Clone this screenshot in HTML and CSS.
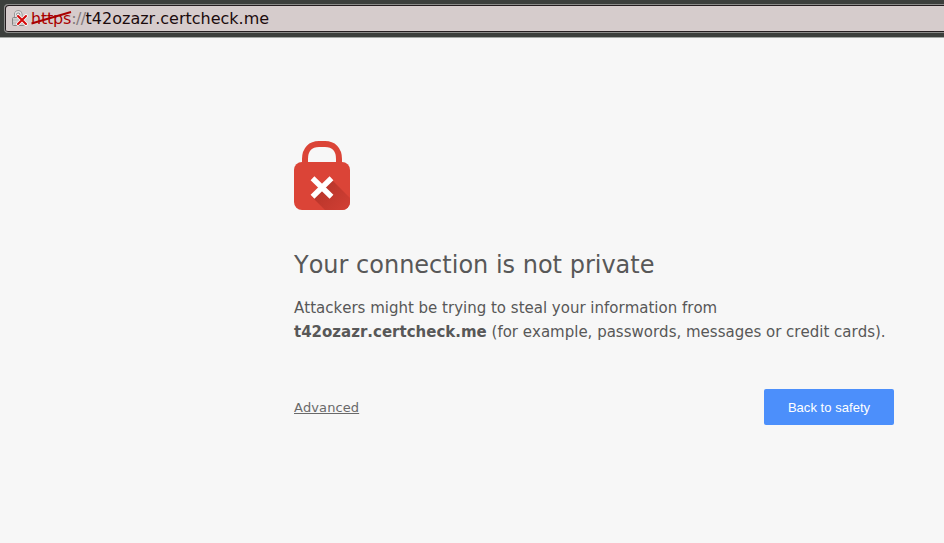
FILE: index.html
```
<!DOCTYPE html>
<html lang="en">
<head>
<meta charset="utf-8">
<title>Privacy error</title>
<link rel="stylesheet" href="styles.css">
</head>
<body>
<header class="toolbar">
  <div class="address">
    <svg class="lock-small" width="17" height="17" viewBox="0 0 17 17">
      <path d="M3.5 8V4.5a2.7 2.7 0 0 1 5.5 0V8" fill="none" stroke="#888" stroke-width="3"/>
      <path d="M3.5 8V4.5a2.7 2.7 0 0 1 5.5 0V8" fill="none" stroke="#e4e2e2" stroke-width="1.4"/>
      <rect x=".5" y="7.5" width="12" height="8" rx="1" fill="#cfcdcd" stroke="#858585"/>
      <path d="M1 10h11M1 13h11" stroke="#b8b6b6"/>
      <path d="M6 6l8 8M14 6l-8 8" stroke="#fff" stroke-width="3.6" stroke-linecap="round"/>
      <path d="M6 6l8 8M14 6l-8 8" stroke="#d40808" stroke-width="2.1" stroke-linecap="round"/>
    </svg>
    <div class="url"><span class="scheme">https<svg class="strike" width="42" height="16" viewBox="0 0 42 16"><path d="M.5 13.5L40 2" stroke="#a90000" stroke-width="2"/></svg></span><span class="sep">://</span>t42ozazr.certcheck.me</div>
  </div>
</header>
<main class="warning">
  <svg class="lock" width="56" height="70" viewBox="0 0 56 70">
    <defs>
      <linearGradient id="shade" gradientUnits="userSpaceOnUse" x1="28" y1="46" x2="50" y2="68">
        <stop offset="0" stop-color="#b8352a"/>
        <stop offset="1" stop-color="#cf3e33"/>
      </linearGradient>
      <clipPath id="body"><rect y="22" width="56" height="48" rx="8"/></clipPath>
    </defs>
    <path d="M11 25V19C11 9 17 4 25 4H31C39 4 45 9 45 19V25" fill="none" stroke="#db4437" stroke-width="6"/>
    <rect y="22" width="56" height="48" rx="8" fill="#db4437"/>
    <path d="M36 38L56 58V70H31L18 57z" fill="url(#shade)" clip-path="url(#body)"/>
    <path d="M18.5 38.2L37.5 56.8M37.5 38.2L18.5 56.8" stroke="#fff" stroke-width="5.4"/>
  </svg>
  <h1>Your connection is not private</h1>
  <p>Attackers might be trying to steal your information from <strong>t42ozazr.certcheck.me</strong> (for example, passwords, messages or credit cards).</p>
  <div class="actions">
    <a class="advanced" href="#">Advanced</a>
    <button class="safety">Back to safety</button>
  </div>
</main>
</body>
</html>
```
FILE: styles.css
```
* { box-sizing: border-box; }
body {
  margin: 0;
  background: #f7f7f7;
  color: #585858;
  font-family: "DejaVu Sans", sans-serif;
  font-size: 15px;
  font-kerning: none;
  overflow: hidden;
}
.toolbar {
  height: 38px;
  padding: 4px 0 0 4px;
  background: #3c3f3c;
  border-bottom: 1px solid #a5a8a5;
}
.address {
  display: flex;
  align-items: center;
  height: 29px;
  padding-left: 7px;
  background: #d6cccc;
  border: 1px solid #8b8b89;
  border-right: 0;
  border-radius: 4px 0 0 4px;
  box-shadow: inset 1px 1px 0 #241d1f, inset 0 -1px 0 #241d1f;
}
.url {
  margin-left: 2px;
  color: #1b0b0d;
  font-size: 16px;
  line-height: 20px;
  white-space: nowrap;
}
.scheme { position: relative; color: #a90000; letter-spacing: -0.2px; }
.strike { position: absolute; left: 0; top: 1px; }
.sep { color: #857b7c; letter-spacing: -0.6px; }
.warning {
  width: 600px;
  margin: 102px 0 0 294px;
}
.lock { display: block; }
h1 {
  margin: 40px 0 16px;
  font-size: 24px;
  font-weight: 400;
  line-height: 30px;
}
p { margin: 0; line-height: 24px; }
.actions {
  display: flex;
  align-items: center;
  justify-content: space-between;
  margin-top: 45px;
}
.advanced { color: #696969; font-size: 13px; letter-spacing: 0.09px; }
.safety {
  width: 130px;
  height: 36px;
  padding: 0;
  border: 0;
  border-radius: 2px;
  background: #4c8ffb;
  color: #fff;
  font: 13px "Liberation Sans", sans-serif;
  font-kerning: none;
  letter-spacing: 0.04px;
}
```
